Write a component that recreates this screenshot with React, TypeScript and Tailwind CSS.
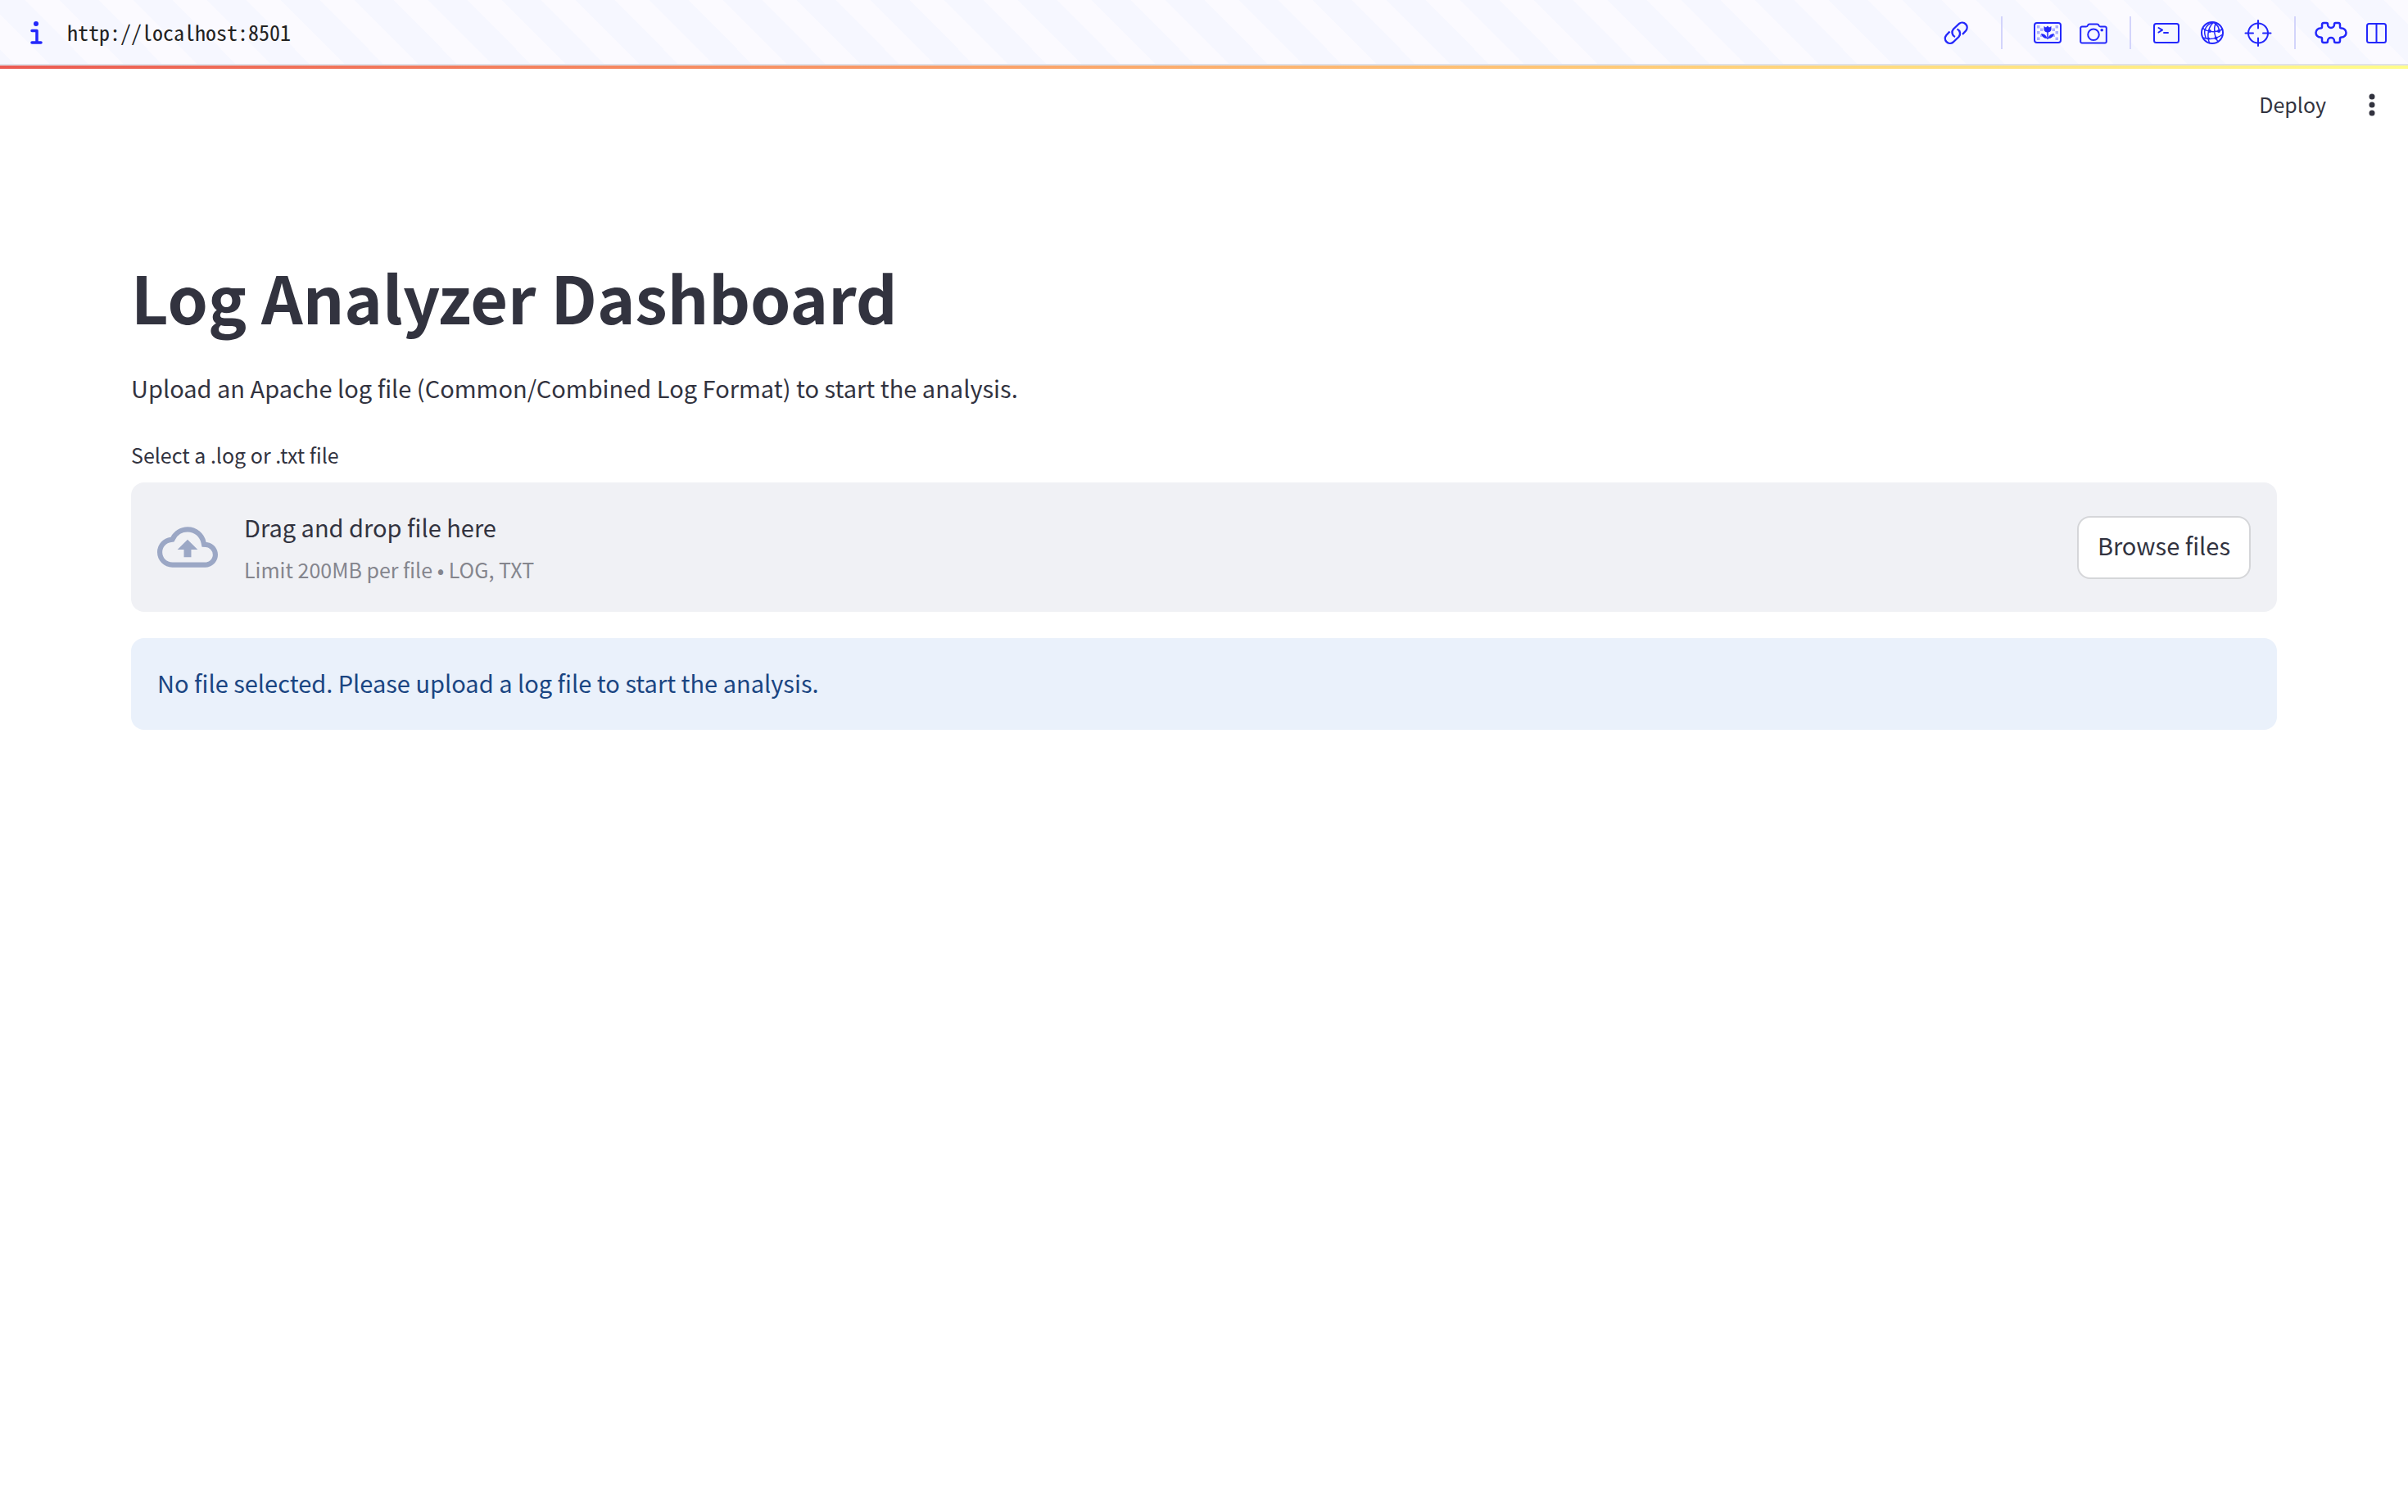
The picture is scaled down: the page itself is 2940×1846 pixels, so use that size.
import React from "react";

function Divider() {
  return <span className="h-10 w-0.5 bg-[#d3d4fb]" />;
}

function Tool({ label, children, className }: { label: string; children: React.ReactNode; className: string }) {
  return (
    <button type="button" aria-label={label} className={`flex h-10 w-10 shrink-0 items-center justify-center text-[#2327fb] ${className}`}>
      <svg viewBox="0 0 40 40" className="h-10 w-10" fill="none" stroke="currentColor" strokeWidth="2" strokeLinecap="round" strokeLinejoin="round" aria-hidden="true">
        {children}
      </svg>
    </button>
  );
}

function LinkIcon() {
  return (
    <g strokeLinecap="butt" strokeWidth="2.400">
      <path d="M27 22L31.200 17.500A6 6 0 0 0 22.800 9L16 15.500A6 6 0 0 0 18 25" />
      <path d="M11.500 18.500L7.300 23A6 6 0 0 0 15.700 31.500L22.500 25A6 6 0 0 0 20.500 15.500" />
    </g>
  );
}

function PictureIcon() {
  return (
    <>
      <rect x="4" y="8" width="32" height="24" rx="3" />
      <g fill="currentColor" stroke="none" fillOpacity="0.35">
        <path d="M7 11h3.500v3.500h-3.500zM11 14.500h3.500v3.500h-3.500zM7 18h3.500v3.500h-3.500zM11 22h2.500v3h-2.500zM7 25.500h3.500v3.500h-3.500zM29.500 11h3.500v3.500h-3.500zM25.500 14.500h3.500v3.500h-3.500zM29.500 18h3.500v3.500h-3.500zM26.500 22h2.500v3h-2.500zM29.500 25.500h3.500v3.500h-3.500z" />
      </g>
      <g fill="currentColor" stroke="none">
        <path d="M15.500 12l2.500 1.500 2-2 2 2 2.500-1.500v3.500c0 2.500-2 4-4.500 4s-4.500-1.500-4.500-4z" />
        <path d="M19.300 19h1.500v9h-1.500z" />
        <path d="M19.500 27c-4 0-6.500-2-7.500-6 4 0 6.500 2 7.500 6zM20.500 27c4 0 6.500-2 7.500-6-4 0-6.500 2-7.500 6z" />
      </g>
    </>
  );
}

export default function App() {
  return (
    <div className="min-h-screen bg-white font-['Noto_Sans_CJK_JP',sans-serif] text-[#32333f]">
      <nav aria-label="Browser tools" className="flex h-20 items-center border-b-2 border-[#e0e1e8] bg-[linear-gradient(45deg,#f6f7ff_21px,#fbfaff_21px_51px,#f6f7ff_51px_85px,#fbfaff_85px_115px,#f6f7ff_115px)] bg-[length:90px_90px] pl-6 pr-[18px] pt-0.5 text-[#222222]">
        <button type="button" aria-label="Page information" className="h-10 w-10">
          <svg viewBox="0 0 40 40" className="h-10 w-10 text-[#2327fb]" aria-hidden="true">
            <circle cx="20" cy="9" r="3" fill="currentColor" />
            <path d="M15 17.500h6v14.500M15 32h11" fill="none" stroke="currentColor" strokeWidth="3.500" strokeLinecap="round" strokeLinejoin="round" />
          </svg>
        </button>
        <span className="ml-[18px] pb-1 font-['Noto_Sans_Mono_CJK_JP','Liberation_Mono',monospace] text-[26px]">http://localhost:8501</span>
        <div className="ml-auto flex items-center">
          <Tool label="Copy link" className="mr-[34px]"><LinkIcon /></Tool>
          <Divider />
          <Tool label="Picture" className="ml-[35px] mr-4"><PictureIcon /></Tool>
          <Tool label="Camera" className="mr-6">
            <path d="M6 12.500h5c1.500 0 1.500-.5 2-1.500.5-1.200 1-1.500 2-1.500h9.500c1 0 1.500.3 2 1.500.5 1 .5 1.500 2 1.500h5.500a1.800 1.800 0 0 1 1.800 1.800v16.400a1.800 1.800 0 0 1-1.800 1.800H6a1.800 1.800 0 0 1-1.800-1.800V14.300A1.800 1.800 0 0 1 6 12.500z" />
            <circle cx="20" cy="22.300" r="6.800" />
            <circle cx="30.200" cy="16.800" r="1.800" fill="currentColor" stroke="none" />
          </Tool>
          <Divider />
          <Tool label="Terminal" className="ml-[23px] mr-4">
            <rect x="5" y="9" width="30" height="23" rx="2.500" />
            <path d="M10.500 14l4.500 2.700-4.500 2.800M17 20h5" />
          </Tool>
          <Tool label="Network" className="mr-4">
            <circle cx="20" cy="20" r="13" />
            <path d="M8.500 14.500c6 5 16 5.500 23.500 1.500M8.500 26c8 2.500 16.500 1.500 23.500-3.500M21.500 7.500c-6 5-8.500 15-5 25M24 8c-2.500 8-1.500 16.500 3 23M21.500 7.500c-5 1-8.500 3.500-10.500 8.500-.8 4 0 8 2 11.500M22 7.500c4 2.500 6.500 6 6.500 11" strokeWidth="1.500" />
            <g fill="currentColor" stroke="none">
              <circle cx="17" cy="18" r="2" />
              <circle cx="28" cy="18" r="2" />
              <circle cx="24.500" cy="26.500" r="2" />
              <circle cx="15.500" cy="27" r="1.500" />
            </g>
          </Tool>
          <Tool label="Pick element" className="mr-6">
            <circle cx="20" cy="20.500" r="12" />
            <path d="M20 5v9.500M20 26.500v9.500M4.500 20.500h9.500M26 20.500h9.500" />
          </Tool>
          <Divider />
          <Tool label="Extensions" className="ml-[23px] mr-4">
            <path strokeWidth="2.500" d="M11 8h3.500c1 0 1.500.5 1.500 2 0 2.500 1.800 4 4 4s4-1.500 4-4c0-1.500.5-2 1.500-2H29c1.500 0 2 1 2 2.500V13c0 1 .5 1.500 2 1.500 3 0 5.500 2.500 5.500 5.500s-2.500 5.500-5.500 5.500c-1.500 0-2 .5-2 1.500v2.500c0 1.500-.5 2.500-2 2.500h-3.500c-1 0-1.500-.5-1.500-2 0-2.500-1.800-4-4-4s-4 1.500-4 4c0 1.500-.5 2-1.500 2H11c-1.500 0-2-1-2-2.500V27c0-1-.5-1.500-2-1.500-3 0-5.500-2.500-5.500-5.500s2.500-5.500 5.500-5.500c1.500 0 2-.5 2-1.500v-2.500C9 9 9.500 8 11 8z" />
          </Tool>
          <Tool label="Split view" className="">
            <rect x="8" y="9" width="23" height="23" rx="2.500" />
            <path d="M19.500 9v23" />
          </Tool>
        </div>
      </nav>
      <div className="h-1 bg-linear-to-r from-[#eb5a52] to-[#fffd8c]" />
      <header className="flex h-[88px] items-center justify-end pr-6">
        <button type="button" className="pb-0.5 text-[25px] leading-10">Deploy</button>
        <button type="button" aria-label="Main menu" className="ml-9 h-10 w-10">
          <svg viewBox="0 0 40 40" className="h-10 w-10" fill="currentColor" aria-hidden="true">
            <circle cx="20" cy="10" r="3.500" />
            <circle cx="20" cy="20" r="3.500" />
            <circle cx="20" cy="30" r="3.500" />
          </svg>
        </button>
      </header>
      <main className="px-40 pt-[138px]">
        <h1 className="text-[79px] font-bold leading-[104px]">Log Analyzer Dashboard</h1>
        <p className="mt-8 text-[29px] leading-[54px]">Upload an Apache log file (Common/Combined Log Format) to start the analysis.</p>
        <section className="mt-[34px]">
          <label htmlFor="log-file" className="block text-[25px] leading-[42px]">Select a .log or .txt file</label>
          <div className="mt-[13px] flex h-[158px] items-center rounded-2xl bg-[#f0f1f5] px-8">
            <svg viewBox="0 0 24 24" className="size-[74px]" fill="#9ba7c5" aria-hidden="true">
              <path d="M19.350 10.040A7.490 7.490 0 0 0 12 4C9.110 4 6.600 5.640 5.350 8.040A5.994 5.994 0 0 0 0 14c0 3.310 2.690 6 6 6h13c2.760 0 5-2.240 5-5 0-2.640-2.050-4.780-4.650-4.960zM19 18H6c-2.210 0-4-1.790-4-4 0-2.050 1.530-3.760 3.560-3.970l1.070-.11.5-.95A5.469 5.469 0 0 1 12 6c2.620 0 4.880 1.860 5.390 4.430l.3 1.500 1.530.11A2.980 2.980 0 0 1 22 15c0 1.650-1.350 3-3 3zM8 13h2.550v3h2.900v-3H16l-4-4z" />
            </svg>
            <div className="ml-8 flex flex-col pt-0.5">
              <span className="text-[29px] leading-[52px]">Drag and drop file here</span>
              <small className="text-[25px] leading-[52px] text-[#84858d]">Limit 200MB per file • LOG, TXT</small>
            </div>
            <button type="button" className="ml-auto h-[77px] rounded-2xl border-2 border-[#d5d6d9] bg-white px-[23px] pb-1 text-[29px]">Browse files</button>
            <input id="log-file" type="file" accept=".log,.txt" className="hidden" />
          </div>
        </section>
        <div role="alert" className="mt-8 flex h-28 items-center rounded-2xl bg-[#eaf1fb] px-8 pb-0.5 text-[29px] text-[#1a4582]">No file selected. Please upload a log file to start the analysis.</div>
      </main>
    </div>
  );
}
